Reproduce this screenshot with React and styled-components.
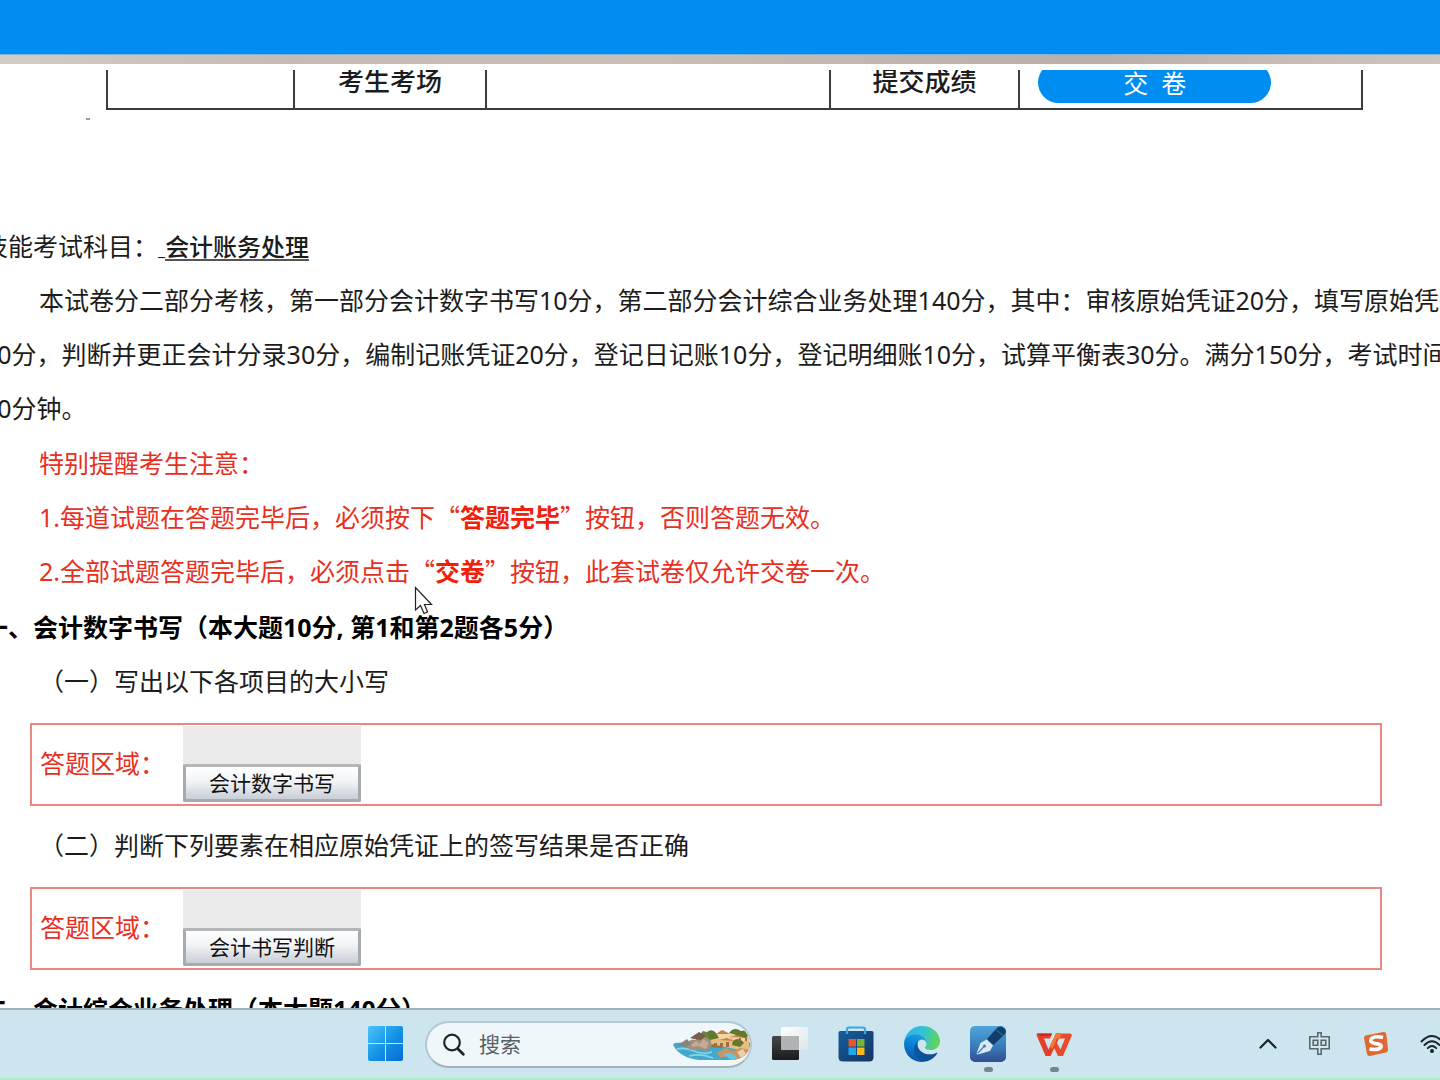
import React from "react"
import styled, { createGlobalStyle } from "styled-components"

const GlobalStyle = createGlobalStyle`
  * {
    box-sizing: border-box;
  }
  body {
    margin: 0;
    background: #fff;
    color: #1c1c1c;
    font-family: "Noto Sans", "Noto Sans CJK SC", sans-serif;
    font-size: 25px;
  }
  button, input {
    font-family: inherit;
  }
`

const Screen = styled.div`
  display: flex;
  flex-direction: column;
  height: 100vh;
  overflow: hidden;
`

const TopBar = styled.header`
  flex: none;
  height: 55px;
  background: #008df2;
  border-bottom: 1px solid #7fb5dd;
`

const PhotoStrip = styled.div`
  flex: none;
  height: 9px;
  background: linear-gradient(90deg, #d3cbc6, #c6bbb4 20%, #cabeb5 45%, #c2b6ae 60%, #b9aea9 76%, #c8bdb6 90%, #cdc4bf);
`

const Viewport = styled.main`
  flex: 1;
  min-height: 0;
  overflow: hidden;
  padding-top: 6px;
`

const TableClip = styled.div`
  display: flex;
  align-items: flex-end;
  height: 40px;
  margin: 0 77px 0 106px;
  overflow: hidden;
`

const InfoTable = styled.table`
  flex: 1;
  table-layout: fixed;
  border-collapse: collapse;
`

const InfoCell = styled.td`
  width: ${props => props.$width};
  height: 57px;
  padding: 0 18px;
  border: 2px solid #3c3c3c;
  text-align: ${props => props.$align || "center"};
  font-size: 26px;
  font-weight: 500;
  line-height: 40px;
  white-space: nowrap;
`

const SubmitButton = styled.button`
  display: block;
  width: 233px;
  height: 41px;
  margin-top: 4px;
  padding: 0;
  border: 0;
  border-radius: 22px;
  background: #008df2;
  color: #fff;
  font-size: 25px;
  line-height: 40px;
  white-space: pre;
`

const Mark = styled.div`
  width: 4px;
  height: 2px;
  margin: 8px 0 99px 86px;
  background: #9a9a9a;
`

const Paper = styled.article`
  margin-left: -17px;
`

const Line = styled.p`
  margin: 0;
  padding-left: ${props => props.$indent || 0}px;
  line-height: 54px;
  white-space: nowrap;
`

const Subject = styled.span`
  border-bottom: 2px solid #555;
  font-size: 24px;
  font-weight: 500;
  line-height: 24px;
  display: inline-block;
`

const Dash = styled.span`
  font-size: 16px;
  line-height: 16px;
`

const Notice = styled.section`
  margin-top: 1px;
  color: #e8301f;
`

// Chinese quotes keep their full width only in the CJK face
const Quoted = styled.span`
  font-family: "Noto Sans CJK SC", sans-serif;
  line-height: 1;
  b {
    color: #f0210b;
  }
`

const Heading = styled.h2`
  margin: 2px 0 0;
  color: #000;
  font-size: 25px;
  font-weight: 700;
  line-height: 54px;
  white-space: nowrap;
`

const AnswerBox = styled.div`
  display: flex;
  align-items: flex-start;
  height: 83px;
  margin: 15px 58px 12px 47px;
  padding: 1px 8px 0;
  border: 2px solid #e98780;
`

const AnswerLabel = styled.span`
  width: 143px;
  color: #e8301f;
  line-height: 74px;
`

const Applet = styled.div`
  display: flex;
  flex-direction: column;
  justify-content: flex-end;
  width: 178px;
  height: 76px;
  background: #ebebeb;
`

const AppletButton = styled.button`
  height: 38px;
  padding: 0;
  border: 3px solid #a7abb0;
  border-top-color: #b4b6b9;
  border-radius: 2px;
  background: linear-gradient(#fff, #f1f3f6 45%, #c9ced7);
  color: #111;
  font-size: 21px;
  line-height: 30px;
`

const Taskbar = styled.footer`
  flex: none;
  display: grid;
  grid-template-columns: 1fr auto 1fr;
  align-items: center;
  height: 72px;
  border-top: 2px solid #a0b0b8;
  border-bottom: 2px solid #afeecb;
  background: #cde5ee;
`

const Pinned = styled.nav`
  grid-column: 2;
  display: flex;
  align-items: center;
  gap: 30px;
`

const SearchGroup = styled.div`
  display: flex;
  align-items: center;
  gap: 21px;
  margin-right: -10px;
`

const IconButton = styled.button`
  position: relative;
  display: flex;
  padding: 0;
  border: 0;
  background: none;
`

const RunningDot = styled.span`
  position: absolute;
  left: 14px;
  top: 41px;
  width: 9px;
  height: 5px;
  border-radius: 3px;
  background: #74858d;
`

const SearchBox = styled.label`
  display: flex;
  align-items: center;
  width: 327px;
  height: 47px;
  padding: 0 0 0 16px;
  border: 2px solid #b4c9d2;
  border-bottom-color: #a2b4bc;
  border-radius: 24px;
  background: #eff7fb;
`

const SearchInput = styled.input`
  flex: 1;
  min-width: 0;
  margin-left: 14px;
  padding: 0;
  border: 0;
  outline: 0;
  background: none;
  font-size: 21px;
  &::placeholder {
    color: #566066;
    opacity: 1;
  }
`

const Tray = styled.div`
  display: flex;
  justify-content: flex-end;
  align-items: center;
  gap: 31px;
  margin-right: -4px;
`

const Pointer = styled.svg`
  position: absolute;
  left: 414px;
  top: 586px;
`

const StartIcon = () => (
  <svg width="36" height="36" viewBox="0 0 36 36">
    <defs>
      <linearGradient id="win" x1="0" y1="0" x2="36" y2="36" gradientUnits="userSpaceOnUse">
        <stop offset="0" stopColor="#4cc5fb" />
        <stop offset="0.5" stopColor="#1593e6" />
        <stop offset="1" stopColor="#0569cf" />
      </linearGradient>
    </defs>
    <g fill="url(#win)">
      <path d="M2 0h15v17H0V2a2 2 0 0 1 2-2z" />
      <path d="M18 0h15a2 2 0 0 1 2 2v15H18z" />
      <path d="M0 18h17v17H2a2 2 0 0 1-2-2z" />
      <path d="M18 18h17v15a2 2 0 0 1-2 2H18z" />
    </g>
  </svg>
)

const SearchIcon = () => (
  <svg width="22" height="23" viewBox="0 0 22 23" fill="none" stroke="#1e2528" strokeLinecap="round">
    <circle cx="9" cy="9.5" r="7.8" strokeWidth="2.2" />
    <path d="M15 16l5.3 5.2" strokeWidth="2.8" />
  </svg>
)

const SceneIcon = () => (
  <svg width="77" height="34" viewBox="0 0 77 34">
    <defs>
      <clipPath id="scene">
        <path d="M0 18C6 10 16 6 26 4C40 0 55 1 70 2Q77 9 77 18Q75 31 60 33H26Q7 31 0 18z" />
      </clipPath>
    </defs>
    <g clipPath="url(#scene)">
      <path d="M0 16Q20 14 45 19L77 15V34H0z" fill="#43a9cc" />
      <path d="M4 22Q12 20 21 24T39 25M16 29Q28 26 40 31" stroke="#88d4e5" strokeWidth="1.6" fill="none" />
      <path d="M26 9l4-5 7 2 4 6 9 9-17-1z" fill="#6c853c" />
      <path d="M37 9l10-3 14 2 15 2v15l-19-4-19-4z" fill="#e7bd80" />
      <path d="M44 7l6-4 7 4v5H44zM60 9l6-4 9 4v5H60z" fill="#f4d4a0" />
      <path d="M43 7l6-4 8 4zM59 10l7-4 9 5zM46 13l8-2 7 3z" fill="#c98043" />
      <path d="M34 5q5-4 9 1l3 5-9 2zM56 6q5-7 12-2 7-2 9 4l-5 3-9-3zM60 14q6-5 11 2l-4 4-8-2z" fill="#61782d" />
      <path d="M41 16h3v4h-3zM47 16h3v4h-3zM53 15h3v5h-3zM66 11h2v3h-2zM72 11h2v3h-2z" fill="#a16c42" />
      <path d="M14 19q2-8 8-6l7-5 8 5 2 6-6 5-11-2-5 1z" fill="#a48d7d" />
      <path d="M18 18l5-4 4 3 3-5 6 4-3 6-8-3-5 1z" fill="#c3ab96" />
      <path d="M17 11l9-6 7 4-5 4-7-1z" fill="#755f4c" />
      <path d="M5 18l9-6 4 5-5 3z" fill="#8c8173" />
      <path d="M44 26l8-5 9 3 6-3 10 2v12H61l-5-6-8 2z" fill="#ca9364" />
      <path d="M50 28q7-5 14 2l-4 4-6-4z" fill="#65c5dc" />
      <path d="M64 25l6-3 3 5-5 4z" fill="#efd0a0" />
    </g>
  </svg>
)

const TaskViewIcon = () => (
  <svg width="36" height="36" viewBox="0 0 36 36">
    <defs>
      <linearGradient id="tvd" x1="0" y1="0" x2="0" y2="1">
        <stop offset="0" stopColor="#464849" />
        <stop offset="1" stopColor="#191b1c" />
      </linearGradient>
      <linearGradient id="tvl" x1="0" y1="0" x2="1" y2="1">
        <stop offset="0" stopColor="#fff" />
        <stop offset="1" stopColor="#dce5e9" />
      </linearGradient>
    </defs>
    <rect x="0" y="10" width="27" height="24" rx="1.5" fill="url(#tvd)" />
    <rect x="9" y="1" width="27" height="23" rx="1.5" fill="url(#tvl)" />
    <path d="M9 10h18v14H10.500a1.500 1.500 0 0 1-1.500-1.500z" fill="#b0b3b4" />
  </svg>
)

const StoreIcon = () => (
  <svg width="36" height="36" viewBox="0 0 36 36">
    <defs>
      <linearGradient id="store" x1="0" y1="0" x2="1" y2="1">
        <stop offset="0" stopColor="#155f9f" />
        <stop offset="1" stopColor="#153461" />
      </linearGradient>
    </defs>
    <path d="M0.500 6.500Q0.500 5 2 5H34Q35.500 5 35.500 6.500V31Q35.500 35.500 31 35.500H5Q0.500 35.500 0.500 31z" fill="url(#store)" />
    <path d="M9 8V3.500Q9 1.500 11 1.500H25Q27 1.500 27 3.500V8" fill="none" stroke="#39a9dc" strokeWidth="2.200" />
    <path d="M10.500 13h7.500v7.500h-7.500z" fill="#ed542d" />
    <path d="M19 13h7.500v7.500H19z" fill="#79b533" />
    <path d="M10.500 21.500h7.500V29h-7.500z" fill="#22a7ec" />
    <path d="M19 21.500h7.500V29H19z" fill="#fbb71a" />
  </svg>
)

const EdgeIcon = () => (
  <svg width="36" height="36" viewBox="0 0 256 256">
    <defs>
      <linearGradient id="edgeDark" x1="58" y1="177" x2="236" y2="177" gradientUnits="userSpaceOnUse">
        <stop offset="0" stopColor="#0c59a4" />
        <stop offset="1" stopColor="#114a8b" />
      </linearGradient>
      <linearGradient id="edgeBlue" x1="130" y1="70" x2="60" y2="240" gradientUnits="userSpaceOnUse">
        <stop offset="0" stopColor="#1b9de2" />
        <stop offset="0.5" stopColor="#0a80d1" />
        <stop offset="1" stopColor="#0a55a8" />
      </linearGradient>
      <linearGradient id="edgeGreen" x1="20" y1="50" x2="245" y2="110" gradientUnits="userSpaceOnUse">
        <stop offset="0" stopColor="#2fb4e8" />
        <stop offset="0.5" stopColor="#35c2d0" />
        <stop offset="1" stopColor="#62d558" />
      </linearGradient>
    </defs>
    <path fill="url(#edgeDark)" d="M231 190.500c-3.400 1.800-6.900 3.400-10.500 4.700a101.400 101.400 0 0 1-35.900 6.500c-47.300 0-88.500-32.500-88.500-74.300a31.500 31.500 0 0 1 16.400-27.300c-42.800 1.800-53.800 46.400-53.800 72.500 0 73.900 68.100 81.400 82.800 81.400 7.900 0 19.800-2.300 27-4.600l1.300-.4a128.300 128.300 0 0 0 66.600-52.800 4 4 0 0 0-5.400-5.700Z" />
    <path fill="url(#edgeBlue)" d="M105.700 241.400a79.200 79.200 0 0 1-22.700-21.300 80.700 80.700 0 0 1 29.500-120c3.200-1.500 8.500-4.100 15.600-4a32.400 32.400 0 0 1 25.700 13 31.900 31.900 0 0 1 6.300 18.700c0-.2 24.500-79.600-80-79.600-43.900 0-80 41.700-80 78.200a130.200 130.200 0 0 0 12.100 56 128 128 0 0 0 156.400 67 75.500 75.500 0 0 1-62.800-8Z" />
    <path fill="url(#edgeGreen)" d="M152.300 148.900c-.9 1-3.400 2.500-3.400 5.600 0 2.600 1.700 5.200 4.800 7.300 14.300 10 41.400 8.600 41.500 8.600a59.600 59.600 0 0 0 30.300-8.300 61.400 61.400 0 0 0 30.400-52.900c.3-22.400-8-37.300-11.300-43.900C223.500 23.900 177.700 0 128 0A128 128 0 0 0 0 126.200c.5-36.500 36.800-66 80-66 3.500 0 23.500.3 42 10a72.600 72.600 0 0 1 30.900 29.300c6.100 10.600 7.200 24.100 7.200 29.500s-2.700 13.300-7.800 19.900Z" />
  </svg>
)

const PenIcon = () => (
  <svg width="36" height="36" viewBox="0 0 36 36">
    <defs>
      <linearGradient id="pen" x1="0" y1="0" x2="0" y2="1">
        <stop offset="0" stopColor="#51a5dc" />
        <stop offset="0.550" stopColor="#397dbc" />
        <stop offset="1" stopColor="#324f91" />
      </linearGradient>
    </defs>
    <rect width="36" height="36" rx="5" fill="url(#pen)" />
    <path d="M17 13L25.500 3.500Q29-1 33 1.500Q37.500 4 35 8L23.500 19z" fill="#123f69" />
    <path d="M25.500 3.500l8 6.500" stroke="#3979ac" strokeWidth="1" />
    <path d="M16.500 13.500l6.500 6-3 5.500-12.500 3.500L6.500 27.500 10.500 17z" fill="#dce9f4" />
    <path d="M7.500 27.500l6.500-7" stroke="#4280b7" strokeWidth="1.200" />
    <circle cx="14.500" cy="20" r="1.600" fill="#4280b7" />
  </svg>
)

const WpsIcon = () => (
  <svg width="36" height="36" viewBox="0 0 36 36">
    <path d="M1 7.500H16L14 12.500H8L12.500 23.500 20 7.500H25.500L14.500 30H9.500L0.500 9z" fill="#e6402b" />
    <path d="M19.500 7.500H34.500L36 9 27 30H22L16.500 18.500 19 13.500 24.500 23.500 29 12.500H22z" fill="#e94a29" />
    <path d="M20 7.500H26L23.500 12.500H21L16 23.500 14 19.500z" fill="#f47b31" />
    <path d="M1 7.500H16L15 10H4z" fill="#cd2b20" />
  </svg>
)

const ChevronIcon = () => (
  <svg width="20" height="12" viewBox="0 0 20 12" fill="none" stroke="#17242a" strokeWidth="2.200" strokeLinecap="round" strokeLinejoin="round">
    <path d="M3.500 9.500L11 2 18.500 9.500" />
  </svg>
)

const ImeIcon = () => (
  <svg width="24" height="26" viewBox="0 0 24 26" fill="none">
    <path d="M3.500 7.500h16v8.500h-16zM11.500 1v23" stroke="#5a686e" strokeWidth="5" />
    <path d="M3.500 7.500h16v8.500h-16zM11.500 2.500v20" stroke="#d8e8ee" strokeWidth="1.800" />
  </svg>
)

const SogouIcon = () => (
  <svg width="26" height="26" viewBox="0 0 26 26">
    <path d="M2.500 4.500L20.500 1Q23 .8 23.300 3L25 18.500Q25 21 23 21.500L7 25Q4.500 25.300 4 23L1 7Q.8 5 2.500 4.500z" fill="#df6932" />
    <path d="M20 6.500Q12 4.500 8.500 7.500 6 11.500 12 12.500 19.500 13.200 17.800 16.500 15 19.500 6.500 18" fill="none" stroke="#fff" strokeWidth="3.600" />
  </svg>
)

const WifiIcon = () => (
  <svg width="24" height="20" viewBox="0 0 24 20" fill="none" stroke="#17242a" strokeWidth="1.900" strokeLinecap="round">
    <path d="M1.500 7.500Q12-3.500 22.500 7.500M4.500 11Q12 3.500 19.500 11M7.800 14.200Q12 10 16.200 14.200" />
    <circle cx="12" cy="17" r="2" fill="#17242a" stroke="none" />
  </svg>
)

const apps = [
  { name: "任务视图", Icon: TaskViewIcon },
  { name: "应用商店", Icon: StoreIcon },
  { name: "浏览器", Icon: EdgeIcon },
  { name: "手写笔", Icon: PenIcon, running: true },
  { name: "WPS", Icon: WpsIcon, running: true },
]

const AnswerArea = ({ action }) => (
  <AnswerBox>
    <AnswerLabel>答题区域：</AnswerLabel>
    <Applet>
      <AppletButton type="button">{action}</AppletButton>
    </Applet>
  </AnswerBox>
)

const ExamPaper = () => (
  <Paper>
    <Line>
      技能考试科目：<Dash>_</Dash>
      <Subject>会计账务处理</Subject>
    </Line>
    <Line $indent={56}>
      本试卷分二部分考核，第一部分会计数字书写10分，第二部分会计综合业务处理140分，其中：审核原始凭证20分，填写原始凭证
    </Line>
    <Line>
      20分，判断并更正会计分录30分，编制记账凭证20分，登记日记账10分，登记明细账10分，试算平衡表30分。满分150分，考试时间
    </Line>
    <Line>90分钟。</Line>
    <Notice>
      <Line $indent={56}>特别提醒考生注意：</Line>
      <Line $indent={56}>
        1.每道试题在答题完毕后，必须按下<Quoted>“<b>答题完毕</b>”</Quoted>按钮，否则答题无效。
      </Line>
      <Line $indent={56}>
        2.全部试题答题完毕后，必须点击<Quoted>“<b>交卷</b>”</Quoted>按钮，此套试卷仅允许交卷一次。
      </Line>
    </Notice>
    <Heading>一、会计数字书写（本大题10分, 第1和第2题各5分）</Heading>
    <Line $indent={56}>（一）写出以下各项目的大小写</Line>
    <AnswerArea action="会计数字书写" />
    <Line $indent={56}>（二）判断下列要素在相应原始凭证上的签写结果是否正确</Line>
    <AnswerArea action="会计书写判断" />
    <Heading>二、会计综合业务处理（本大题140分）</Heading>
  </Paper>
)

class App extends React.Component {
  render() {
    return (
      <Screen lang="zh-CN">
        <GlobalStyle />
        <TopBar />
        <PhotoStrip />
        <Viewport>
          <TableClip>
            <InfoTable>
              <tbody>
                <tr>
                  <InfoCell $width="14.9%" />
                  <InfoCell $width="15.3%">考生考场</InfoCell>
                  <InfoCell $width="27.4%" />
                  <InfoCell $width="15.1%">提交成绩</InfoCell>
                  <InfoCell $width="27.3%" $align="left">
                    <SubmitButton type="button">交  卷</SubmitButton>
                  </InfoCell>
                </tr>
              </tbody>
            </InfoTable>
          </TableClip>
          <Mark />
          <ExamPaper />
        </Viewport>
        <Taskbar>
          <Pinned>
            <SearchGroup>
              <IconButton type="button" aria-label="开始">
                <StartIcon />
              </IconButton>
              <SearchBox>
                <SearchIcon />
                <SearchInput type="text" placeholder="搜索" aria-label="搜索" />
                <SceneIcon />
              </SearchBox>
            </SearchGroup>
            {apps.map(({ name, Icon, running }) => (
              <IconButton type="button" key={name} aria-label={name}>
                <Icon />
                {running && <RunningDot />}
              </IconButton>
            ))}
          </Pinned>
          <Tray>
            <ChevronIcon />
            <ImeIcon />
            <SogouIcon />
            <WifiIcon />
          </Tray>
        </Taskbar>
        <Pointer width="20" height="30" viewBox="0 0 20 30">
          <path d="M1.500 1.500V24L6.500 19.500 10 27.500 13.500 26 10.500 18.500H17.500z" fill="#fff" stroke="#222" strokeWidth="1.200" />
        </Pointer>
      </Screen>
    )
  }
}

export default App
